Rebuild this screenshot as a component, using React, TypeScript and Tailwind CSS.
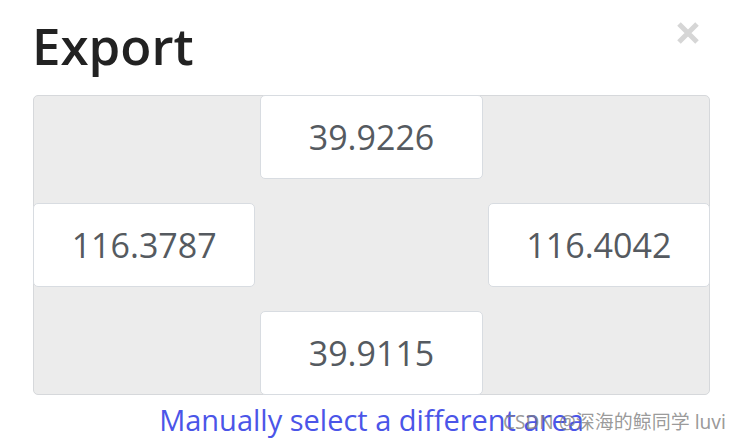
import React from 'react'

const bounds = {
  north: '39.9226',
  west: '116.3787',
  east: '116.4042',
  south: '39.9115',
}

function CoordBox({ value, className = '' }: { value: string; className?: string }) {
  return (
    <div
      className={`flex items-center justify-center h-[84px] bg-white border border-[#d8dce1] rounded-[5px] text-[34px] text-[#555a60] ${className}`}
    >
      {value}
    </div>
  )
}

export default function App() {
  return (
    <div
      className="relative w-[743px] h-[443px] overflow-hidden bg-white"
      style={{ fontFamily: '"Open Sans", "Noto Sans", sans-serif' }}
    >
      {/* Header */}
      <div className="flex items-start justify-between pl-[32px] pr-[43px] pt-[20px]">
        <h3 className="text-[51px] leading-none font-semibold text-[#222]">Export</h3>
        <button className="mt-[2px] text-[#d6d6d6]" aria-label="Close">
          <svg width="24" height="22" viewBox="0 0 24 22">
            <path d="M3 2 L21 20 M21 2 L3 20" stroke="currentColor" strokeWidth="5" />
          </svg>
        </button>
      </div>

      {/* Bounds well */}
      <div className="ml-[33px] mt-[24px] w-[677px] rounded-[5px] border border-[#d6d8db] bg-[#ececec]">
        <div className="-m-px grid grid-cols-3 gap-x-[5px] gap-y-6">
          <div />
          <CoordBox value={bounds.north} />
          <div />
          <CoordBox value={bounds.west} />
          <div />
          <CoordBox value={bounds.east} />
          <div />
          <CoordBox value={bounds.south} />
          <div />
        </div>
      </div>

      <div className="ml-[33px] w-[677px] mt-[10px] text-center">
        <a href="#" className="text-[29px] leading-none text-[#4b55e8]">
          Manually select a different area
        </a>
        <p className="mt-[4px] pl-[120px] text-[24px] leading-none text-[#d4d4d4] whitespace-nowrap">
          hold shift and drag on the map to choose the area to export
        </p>
      </div>

      {/* watermark */}
      <div
        className="absolute left-[503px] top-[408px] text-[19px] text-[#7f7f7f]/80 whitespace-nowrap"
        style={{ fontFamily: '"Noto Sans", "Noto Sans CJK SC", sans-serif' }}
      >
        CSDN @深海的鲸同学 luvi
      </div>
    </div>
  )
}
